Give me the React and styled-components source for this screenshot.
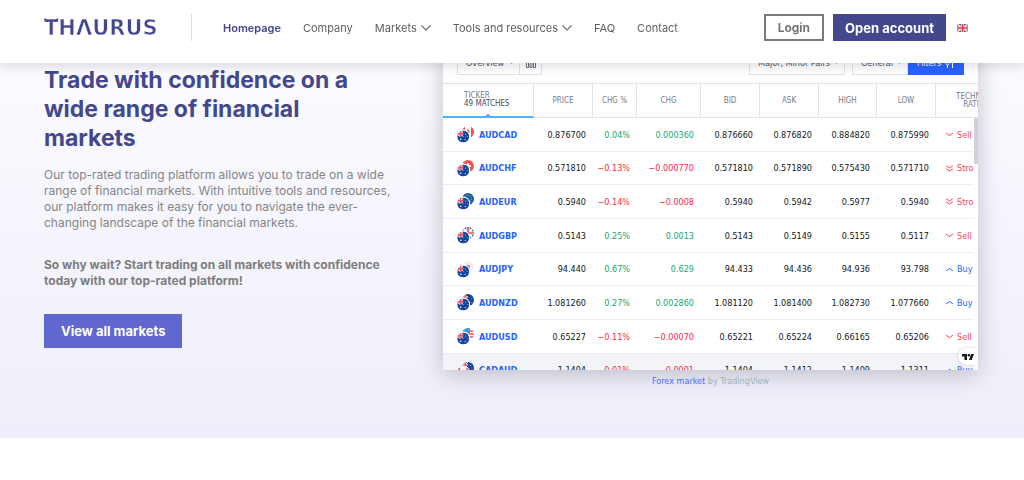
import React from "react";
import styled, { createGlobalStyle } from "styled-components";

const GlobalStyle = createGlobalStyle`
    * {
        box-sizing: border-box;
    }

    body {
        margin: 0;
        background: #fff;
        font-family: Inter, "Open Sans", sans-serif;
        font-size: 12px;
        color: #7d7d7d;
    }

    h2, p {
        margin: 0;
    }

    a {
        text-decoration: none;
        color: inherit;
    }
`;

const Header = styled.header`
    position: fixed;
    top: 0;
    left: 0;
    right: 0;
    z-index: 10;
    display: flex;
    align-items: center;
    padding: 14px 56px 22px 44px;
    background: #fff;
    box-shadow: 0 3px 10px rgba(40, 40, 60, 0.16);
`;

const LogoLink = styled.a`
    display: flex;
    width: 148px;
    height: 27px;
    align-items: center;
    border-right: 1px solid #dedede;
`;

const Nav = styled.nav`
    display: flex;
    gap: 22px;
    margin-left: 31px;
`;

const NavLink = styled.a`
    display: flex;
    align-items: center;
    gap: 4px;
    font-size: 11px;
    line-height: 16px;
    font-weight: ${({ $active }) => ($active ? 600 : 400)};
    color: ${({ $active }) => ($active ? "#43478b" : "#5f5f5f")};
`;

const Actions = styled.div`
    display: flex;
    align-items: center;
    gap: 9px;
    margin-left: auto;
`;

const Button = styled.button`
    height: 27px;
    padding: 0 12px;
    font-family: inherit;
    font-size: ${({ $outline }) => ($outline ? 12 : 13)}px;
    font-weight: 700;
    white-space: nowrap;
    cursor: pointer;
    color: ${({ $outline }) => ($outline ? "#757575" : "#fff")};
    background: ${({ $outline }) => ($outline ? "#fff" : "#43478b")};
    border: ${({ $outline }) => ($outline ? "2px solid #7b7b7b" : "none")};
`;

const LangButton = styled.button`
    display: flex;
    padding: 0;
    margin-left: 2px;
    border: none;
    background: none;
    cursor: pointer;
`;

const Hero = styled.section`
    display: grid;
    grid-template-columns: minmax(0, 354fr) minmax(0, 535fr);
    gap: 45px;
    padding: 40px 46px 49px 44px;
    background: linear-gradient(#fdfcff, #faf9ff 25%, #eeeefa);
`;

const Intro = styled.div`
    padding-top: 26px;
    line-height: 16px;
`;

const Title = styled.h2`
    padding-right: 8px;
    font-size: 23px;
    line-height: 29px;
    font-weight: 700;
    color: #43478b;
`;

const Text = styled.p`
    margin-top: 14px;
    color: #858585;
`;

const BoldText = styled.p`
    margin: 26px 0 25px;
    font-weight: 700;
    color: #7d7d7d;
`;

const MarketsLink = styled.a`
    display: inline-block;
    padding: 0 17px;
    line-height: 34px;
    font-size: 13px;
    font-weight: 700;
    color: #fff;
    background: #6068d0;
`;

const Widget = styled.div`
    position: relative;
    height: 330px;
    overflow: hidden;
    background: #fff;
    font-family: "DejaVu Sans Condensed", "Noto Sans", sans-serif;
    font-size: 9px;
`;

const WidgetShadow = styled.div`
    box-shadow: 0 4px 22px rgba(50, 50, 70, 0.28);
`;

const Toolbar = styled.div`
    display: flex;
    padding: 11px 14px 8px;
`;

const Picker = styled.label`
    display: grid;
    align-items: center;
    width: ${({ $width }) => $width}px;
    height: 24px;
    border: 1px solid #e0e3eb;
    margin-left: ${({ $push }) => $push || "0"};

    > * {
        grid-area: 1 / 1;
    }

    select {
        width: 100%;
        padding: 0 0 0 8px;
        appearance: none;
        border: none;
        background: none;
        font: 9px "DejaVu Sans Condensed", "Noto Sans", sans-serif;
        color: #4a4e59;
    }

    svg {
        justify-self: end;
        margin-right: 5px;
        pointer-events: none;
    }
`;

const ColumnsButton = styled.button`
    display: grid;
    place-items: center;
    width: 22px;
    height: 24px;
    padding: 0;
    border: 1px solid #e0e3eb;
    border-left: none;
    background: #fff;
`;

const FiltersButton = styled.button`
    display: flex;
    align-items: center;
    justify-content: center;
    gap: 4px;
    width: 56px;
    height: 24px;
    padding: 0;
    border: none;
    background: #2962ff;
    color: #fff;
    font: 9px "DejaVu Sans Condensed", "Noto Sans", sans-serif;
`;

const Table = styled.table`
    width: 100%;
    min-width: 575px;
    table-layout: fixed;
    border-collapse: separate;
    border-spacing: 0;
    border-top: 1px solid #e0e3eb;
`;

const HeadCell = styled.th`
    width: ${({ $width }) => $width}px;
    height: 34px;
    padding: 0;
    border-right: 1px solid #e0e3eb;
    border-bottom: 1px solid #e0e3eb;
    font-size: 8px;
    line-height: 8px;
    font-weight: 400;
    color: #787b86;
`;

const TickerHead = styled(HeadCell)`
    position: relative;
    padding-left: 21px;
    text-align: left;
    border-bottom: 2px solid #4fb0f2;

    &::after {
        content: "";
        position: absolute;
        left: 42px;
        bottom: 0;
        border: 3px solid transparent;
        border-top: 0;
        border-bottom: 2px solid #42a5e8;
    }
`;

const Matches = styled.div`
    color: #4a4e59;
`;

const Row = styled.tr`
    height: 34px;
    background: ${({ $hovered }) => ($hovered ? "#f3f4f8" : "#fff")};

    &:nth-child(3n + 2) {
        height: 33px;
    }
`;

const colors = {
    up: "#16a574",
    down: "#f7294a",
    buy: "#2962ff",
    sell: "#f7455f",
};

const Cell = styled.td`
    padding: 0 7px 0 0;
    border-bottom: 1px solid #eceef3;
    text-align: right;
    white-space: nowrap;
    color: ${({ $tone }) => colors[$tone] || "#131722"};
`;

const Ticker = styled.a`
    display: flex;
    align-items: center;
    gap: 5px;
    padding-left: 14px;
    font-weight: 600;
    color: #2962ff;
`;

const Rating = styled.div`
    display: flex;
    align-items: center;
    gap: 4px;
    padding-left: 10px;
`;

const ScrollTrack = styled.div`
    position: absolute;
    top: 78px;
    right: 0;
    bottom: 0;
    width: 4px;
    background: #fff;
`;

const ScrollThumb = styled.div`
    height: 46px;
    background: #cfd1dc;
    border-radius: 1px;
`;

const Badge = styled.a`
    position: absolute;
    right: 0;
    bottom: 5px;
    display: grid;
    place-items: center;
    width: 20px;
    height: 17px;
    border-radius: 9px 0 0 9px;
    background: #fff;
    box-shadow: 0 0 2px rgba(0, 0, 0, 0.25);
`;

const Caption = styled.p`
    padding-top: 4px;
    text-align: center;
    font: 9px/15px "DejaVu Sans Condensed", "Noto Sans", sans-serif;
    color: #9db2bd;

    a {
        color: #4c6cf5;
    }
`;

// the thin white stroke trims the bold letters to the weight of the wordmark
const Logo = () => (
    <svg width="120" height="27" viewBox="0 0 120 27" role="img" aria-label="Thaurus">
        <text
            x="0"
            y="21"
            fontFamily="DejaVu Sans"
            fontWeight="700"
            fontSize="21"
            fill="#43478b"
            stroke="#fff"
            strokeWidth="0.7"
        >
            THΛURUS
        </text>
        <path d="M1 4.500C1 6.500 2 7.300 4 7.300M13.500 4.500C13.500 6.500 12.500 7.300 10.500 7.300" fill="none" stroke="#43478b" strokeWidth="1.6" />
    </svg>
);

const Chevron = () => (
    <svg width="10" height="6" viewBox="0 0 10 6" fill="none" stroke="#6f6f6f" strokeWidth="1.2">
        <path d="M0.500 0.500L5 5L9.500 0.500" />
    </svg>
);

const Caret = () => (
    <svg width="5" height="4" viewBox="0 0 5 4">
        <path d="M0.500 0.500h4L2.500 3z" fill="#787b86" />
    </svg>
);

const UkFlag = () => (
    <svg width="11" height="8" viewBox="0 0 11 8">
        <rect width="11" height="8" fill="#4a5597" />
        <path d="M0 0L11 8M11 0L0 8" stroke="#fff" strokeWidth="1.6" />
        <path d="M0 0L11 8M11 0L0 8" stroke="#e8606c" strokeWidth="0.6" />
        <path d="M5.500 0V8M0 4H11" stroke="#fff" strokeWidth="3" />
        <path d="M5.500 0V8M0 4H11" stroke="#e5343f" strokeWidth="1.7" />
    </svg>
);

// each flag is drawn in a 12x12 box and clipped to a circle
const flags = {
    AUD: (
        <>
            <rect width="12" height="12" fill="#14479b" />
            <path d="M0 0L6 6M6 0L0 6" stroke="#fff" strokeWidth="1" />
            <path d="M3 0V6M0 3H6" stroke="#fff" strokeWidth="2.200" />
            <path d="M3.200 0V6M0 3.200H6" stroke="#ef4b55" strokeWidth="1.500" />
            <circle cx="3.500" cy="8.800" r="0.800" fill="#fff" />
            <circle cx="8.500" cy="3.500" r="0.500" fill="#fff" />
            <circle cx="10" cy="6" r="0.400" fill="#fff" />
            <circle cx="8" cy="9" r="0.600" fill="#fff" />
        </>
    ),
    CAD: (
        <>
            <rect width="12" height="12" fill="#fff" />
            <path d="M0 0H3V12H0zM9 0H12V12H9zM6 3L8 6L6 8L4 6z" fill="#ef4e52" />
        </>
    ),
    CHF: (
        <>
            <rect width="12" height="12" fill="#f0524f" />
            <path d="M6 3V9M3 6H9" stroke="#fff" strokeWidth="2" />
        </>
    ),
    EUR: (
        <>
            <rect width="12" height="12" fill="#1a5dad" />
            <circle cx="6" cy="6" r="3.500" fill="none" stroke="#c4c95c" strokeDasharray="1 1.700" />
        </>
    ),
    GBP: (
        <>
            <rect width="12" height="12" fill="#1b4a9c" />
            <path d="M0 0L12 12M12 0L0 12" stroke="#fff" strokeWidth="2" />
            <path d="M6 0V12M0 6H12" stroke="#fff" strokeWidth="3.500" />
            <path d="M6 0V12M0 6H12" stroke="#ef4b55" strokeWidth="1.700" />
        </>
    ),
    JPY: (
        <>
            <rect width="12" height="12" fill="#f0f2f7" />
            <circle cx="6" cy="6" r="2.200" fill="#f0707c" />
        </>
    ),
    NZD: (
        <>
            <rect width="12" height="12" fill="#14479b" />
            <path d="M3 0V6M0 3H6" stroke="#fff" strokeWidth="2.200" />
            <path d="M3 0V6M0 3H6" stroke="#ef4b55" strokeWidth="1.200" />
            <circle cx="9.500" cy="5" r="0.700" fill="#ef4b55" />
            <circle cx="9" cy="8.500" r="0.700" fill="#ef4b55" />
        </>
    ),
    USD: (
        <>
            <rect width="12" height="12" fill="#fff" />
            <path d="M0 3H12M0 6H12M0 9H12" stroke="#ef5350" strokeWidth="1.400" />
            <path d="M0 0H8V5H0z" fill="#3c9be8" />
        </>
    ),
};

const PairIcon = ({ base, quote, ring }) => (
    <svg width="17" height="17" viewBox="0 0 17 17">
        <defs>
            <clipPath id="flag-circle">
                <circle cx="6" cy="6" r="6" />
            </clipPath>
        </defs>
        <g transform="translate(5 0)" clipPath="url(#flag-circle)">{flags[quote]}</g>
        <circle cx="6.200" cy="10.500" r="7" fill={ring} />
        <g transform="translate(0.200 4.500)" clipPath="url(#flag-circle)">{flags[base]}</g>
    </svg>
);

const RatingIcon = ({ rating }) => (
    <svg width="7" height="7" viewBox="0 0 7 7" fill="none" stroke="currentColor" strokeLinecap="round">
        {rating === "Buy" && <path d="M0.500 4.500L3.500 2.500L6.500 4.500" />}
        {rating === "Sell" && <path d="M0.500 2.500L3.500 4.500L6.500 2.500" />}
        {rating === "Strong sell" && <path d="M0.500 1L3.500 3L6.500 1M0.500 4L3.500 6L6.500 4" />}
    </svg>
);

const columns = [
    ["PRICE", 59],
    ["CHG %", 44],
    ["CHG", 64],
    ["BID", 59],
    ["ASK", 59],
    ["HIGH", 58],
    ["LOW", 59],
];

const pairs = [
    ["AUD", "CAD", "0.876700", "0.04%", "0.000360", "0.876660", "0.876820", "0.884820", "0.875990", "Sell"],
    ["AUD", "CHF", "0.571810", "−0.13%", "−0.000770", "0.571810", "0.571890", "0.575430", "0.571710", "Strong sell"],
    ["AUD", "EUR", "0.5940", "−0.14%", "−0.0008", "0.5940", "0.5942", "0.5977", "0.5940", "Strong sell"],
    ["AUD", "GBP", "0.5143", "0.25%", "0.0013", "0.5143", "0.5149", "0.5155", "0.5117", "Sell"],
    ["AUD", "JPY", "94.440", "0.67%", "0.629", "94.433", "94.436", "94.936", "93.798", "Buy"],
    ["AUD", "NZD", "1.081260", "0.27%", "0.002860", "1.081120", "1.081400", "1.082730", "1.077660", "Buy"],
    ["AUD", "USD", "0.65227", "−0.11%", "−0.00070", "0.65221", "0.65224", "0.66165", "0.65206", "Sell"],
    ["CAD", "AUD", "1.1404", "−0.01%", "−0.0001", "1.1404", "1.1412", "1.1409", "1.1311", "Buy"],
];

const Screener = () => (
    <Widget>
        <Toolbar>
            <Picker $width={63}>
                <select aria-label="View">
                    <option>Overview</option>
                </select>
                <Caret />
            </Picker>
            <ColumnsButton aria-label="Columns">
                <svg width="10" height="10" viewBox="0 0 10 10" fill="none" stroke="#6a6d78">
                    <path d="M0.500 2.500h2v7h-2zM4 2.500h2v7h-2zM7.500 2.500h2v7h-2z" />
                </svg>
            </ColumnsButton>
            <Picker $width={96} $push="auto">
                <select aria-label="Pairs">
                    <option>Major, Minor Pairs</option>
                </select>
                <Caret />
            </Picker>
            <Picker $width={56} $push="7px">
                <select aria-label="Rating type">
                    <option>General</option>
                </select>
                <Caret />
            </Picker>
            <FiltersButton>
                Filters
                <svg width="10" height="10" viewBox="0 0 10 10" fill="none" stroke="#fff">
                    <path d="M2.500 0V4M2.500 7V10M7.500 3V10M6 3.500L7.500 1.500L9 3.500" />
                    <circle cx="2.500" cy="5.500" r="1.500" />
                </svg>
            </FiltersButton>
        </Toolbar>
        <Table>
            <thead>
                <tr>
                    <TickerHead $width={91}>
                        TICKER
                        <Matches>49 MATCHES</Matches>
                    </TickerHead>
                    {columns.map(([label, width]) => (
                        <HeadCell key={label} $width={width}>{label}</HeadCell>
                    ))}
                    <HeadCell $width={82}>TECHNICAL<br />RATING</HeadCell>
                </tr>
            </thead>
            <tbody>
                {pairs.map(([base, quote, price, chgPct, chg, bid, ask, high, low, rating]) => {
                    const tone = chg.startsWith("−") ? "down" : "up";
                    const hovered = base === "CAD";
                    return (
                        <Row key={base + quote} $hovered={hovered}>
                            <Cell>
                                <Ticker href="#">
                                    <PairIcon base={base} quote={quote} ring={hovered ? "#f3f4f8" : "#fff"} />
                                    {base + quote}
                                </Ticker>
                            </Cell>
                            <Cell>{price}</Cell>
                            <Cell $tone={tone}>{chgPct}</Cell>
                            <Cell $tone={tone}>{chg}</Cell>
                            <Cell>{bid}</Cell>
                            <Cell>{ask}</Cell>
                            <Cell>{high}</Cell>
                            <Cell>{low}</Cell>
                            <Cell $tone={rating === "Buy" ? "buy" : "sell"}>
                                <Rating><RatingIcon rating={rating} />{rating}</Rating>
                            </Cell>
                        </Row>
                    );
                })}
            </tbody>
        </Table>
        <ScrollTrack><ScrollThumb /></ScrollTrack>
        <Badge href="#" aria-label="TradingView">
            <svg width="12" height="6" viewBox="0 0 12 6" fill="#131722">
                <path d="M0 0H5V6H2.500V2.500H0zM9.200 0H12L9.700 6H7z" />
                <circle cx="6.900" cy="1.300" r="1.300" />
            </svg>
        </Badge>
    </Widget>
);

export default function App() {
    return (
        <>
            <GlobalStyle />
            <Header>
                <LogoLink href="#"><Logo /></LogoLink>
                <Nav>
                    <NavLink href="#" $active>Homepage</NavLink>
                    <NavLink href="#">Company</NavLink>
                    <NavLink href="#">Markets <Chevron /></NavLink>
                    <NavLink href="#">Tools and resources <Chevron /></NavLink>
                    <NavLink href="#">FAQ</NavLink>
                    <NavLink href="#">Contact</NavLink>
                </Nav>
                <Actions>
                    <Button $outline>Login</Button>
                    <Button>Open account</Button>
                    <LangButton aria-label="English"><UkFlag /></LangButton>
                </Actions>
            </Header>
            <Hero>
                <Intro>
                    <Title>Trade with confidence on a wide range of financial markets</Title>
                    <Text>
                        Our top-rated trading platform allows you to trade on a wide range of financial
                        markets. With intuitive tools and resources, our platform makes it easy for you
                        to navigate the ever-changing landscape of the financial markets.
                    </Text>
                    <BoldText>
                        So why wait? Start trading on all markets with confidence today with our
                        top-rated platform!
                    </BoldText>
                    <MarketsLink href="#">View all markets</MarketsLink>
                </Intro>
                <div>
                    <WidgetShadow><Screener /></WidgetShadow>
                    <Caption><a href="#">Forex market</a> by TradingView</Caption>
                </div>
            </Hero>
        </>
    );
}
